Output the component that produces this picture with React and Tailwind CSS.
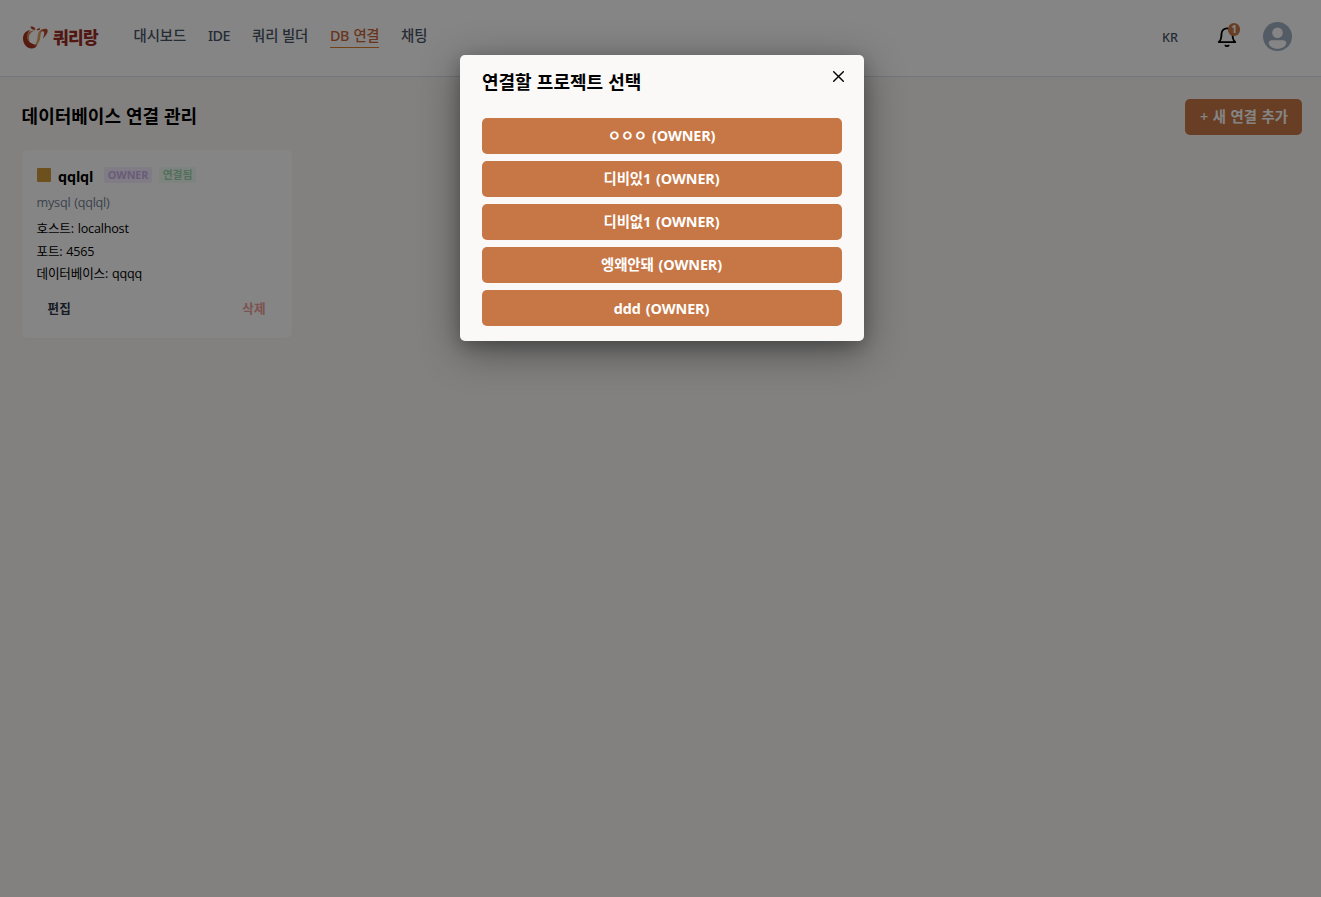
import React from "react";

const projects = ["ㅇㅇㅇ (OWNER)", "디비있1 (OWNER)", "디비없1 (OWNER)", "엥왜안돼 (OWNER)", "ddd (OWNER)"];

function Logo() {
  return (
    <div className="flex w-[111.500px] items-center pt-[3px]">
      <svg className="h-[26px] w-[27px] shrink-0" viewBox="0 0 27 26" fill="none">
        <path d="M8.500 5C4 5.500.8 9 1 14c.3 5.500 4.200 9.500 8.500 9.500 3 0 5-1.500 6-4.500-1.500.7-3.500.5-5.200-.2C6.500 17 4.500 13.500 5.500 9.500 6 7.500 7 6 8.500 5Z" fill="#a83222" />
        <path d="M5 9.500C6.500 6.500 9.500 5.200 13.500 5.500c-4 .8-6 3-6.500 6-.3 2 0 3.500.8 5C5.500 15 4.500 12.500 5 9.500Z" fill="#d4854b" />
        <path d="M12 21c2.800-2.500 3.300-6.500 3.800-10.500C16.300 6 19 4 22 4c-3 2-3.200 4.500-3.700 8-.6 4.800-2.300 7.800-6.300 9Z" fill="#dfa35d" />
        <path d="M18 7.500C19.500 4.300 22.500 3 24.800 4c2 1.300.8 5.500-4 9.500 1.500-3.500 2-6.200.7-7-.9-.5-2.300-.1-3.500 1Z" fill="#b94a30" />
        <path d="M8.300 1.800c2.500-.8 4.400.2 5.200 2.800-2.300.8-4.400-.2-5.200-2.800Z" fill="#b83c26" />
        <path d="M15.500 4.600 17.500 4" stroke="#b83c26" strokeWidth="1.400" strokeLinecap="round" />
      </svg>
      <span className="ml-[4px] text-[17px] leading-6 font-black tracking-[-0.7px] whitespace-nowrap text-[#9c2d26]">쿼리랑</span>
    </div>
  );
}

function Header() {
  return (
    <header className="flex h-[77px] items-center border-b border-[#d9dfe7] bg-white pr-[29px] pb-[3px] pl-[22px]">
      <Logo />
      <nav className="flex flex-1 gap-[22px] font-['Noto_Sans','Noto_Sans_CJK_KR',sans-serif] text-[14.4px] leading-[22px] font-medium whitespace-nowrap text-[#4a5568]">
        <span className="w-[52.5px] tracking-[-0.1px]">대시보드</span>
        <span className="w-[22px] tracking-[-0.6px]">IDE</span>
        <span className="w-[56px] tracking-[-0.1px]">쿼리 빌더</span>
        <span className="h-[23px] w-[49px] border-b border-[#dd7d2b] tracking-[-0.4px] [word-spacing:1px] text-[#c76739]">DB 연결</span>
        <span className="w-[26px]">채팅</span>
      </nav>
      <span className="mt-[4px] w-[54px] font-['Noto_Sans','Noto_Sans_CJK_KR',sans-serif] text-[12.6px] font-medium text-[#4a5568]">KR</span>
      <div className="relative mr-[25px] h-[22px] w-[22px]">
        <svg className="h-[22px] w-[22px]" viewBox="0 0 24 24" fill="none" stroke="black" strokeWidth="2" strokeLinejoin="round">
          <path d="M18 8.500A6 6 0 0 0 6 8.500c0 7-3 9-3 9h18s-3-2-3-9M14.200 20.800a2.600 2.600 0 0 1-4.400 0" />
        </svg>
        <span className="absolute -top-[3px] left-[12px] flex h-[13px] w-[12px] items-center justify-center rounded-full bg-[#c77748] text-[10px] leading-[13px] font-bold text-white">1</span>
      </div>
      <svg className="h-[29px] w-[29px]" viewBox="0 0 29 29">
        <circle cx="14.500" cy="14.500" r="14.500" fill="#a0aec0" />
        <circle cx="14.500" cy="10.700" r="5.300" fill="white" />
        <path d="M5.700 21c0-2 1.300-2.800 3.300-2.800h11c2 0 3.300.8 3.300 2.800 0 3.300-4.500 5.800-8.800 5.800S5.700 24.300 5.700 21Z" fill="white" />
      </svg>
    </header>
  );
}

function ConnectionCard() {
  return (
    <section className="mt-[15px] h-[188px] w-[270.400px] rounded-[5px] bg-white px-[15px] pt-[14px] shadow-[0_1px_2px_rgba(0,0,0,0.03)]">
      <div className="flex h-[22px] items-center whitespace-nowrap">
        <span className="h-[14px] w-[14px] rounded-[1px] bg-[#d09c3c]" />
        <span className="mt-[3px] ml-[7.500px] w-[36px] text-[14.4px] leading-[22px] font-bold tracking-[-0.2px]">qqlql</span>
        <span className="ml-[10px] flex h-[16px] w-[48px] items-center justify-center rounded-[2px] bg-[#f3edff] text-[10.8px] font-bold tracking-[-0.1px] text-[#cbb0e9]">OWNER</span>
        <span className="ml-[7px] flex h-[16px] w-[37px] items-center justify-center rounded-[2px] bg-[#effbf2] text-[10.8px] font-bold text-[#a0d5ae]">연결됨</span>
      </div>
      <p className="mt-[7px] text-[12.6px] leading-[19px] tracking-[-0.22px] [word-spacing:0.8px] text-[#718096]">mysql (qqlql)</p>
      <div className="mt-[6px] text-[12.6px] leading-[22.5px] tracking-[-0.2px] [word-spacing:0.8px]">
        <p>호스트: localhost</p>
        <p>포트: 4565</p>
        <p>데이터베이스: qqqq</p>
      </div>
      <div className="mt-[13.500px] flex justify-between pr-[11.500px] pl-[11px] text-[12.600px] leading-[20px] font-semibold">
        <button className="text-[#2d3748]">편집</button>
        <button className="text-[#ec9f98]">삭제</button>
      </div>
    </section>
  );
}

function ProjectDialog() {
  return (
    <div role="dialog" className="h-[286px] w-[404px] rounded-[5px] bg-[#faf9f7] px-[22px] pt-[14px] shadow-[0_10px_40px_rgba(0,0,0,0.4),0_5px_15px_rgba(0,0,0,0.2)]">
      <div className="flex h-[49px] items-start justify-between">
        <h2 className="text-[18px] leading-[26px] font-semibold whitespace-nowrap [word-spacing:0.5px]">연결할 프로젝트 선택</h2>
        <button aria-label="닫기" className="-mr-[2px] mt-[2px]">
          <svg className="h-[11px] w-[11px]" viewBox="0 0 11 11" fill="none" stroke="black" strokeWidth="1.400" strokeLinecap="round">
            <path d="m.7.7 9.600 9.600m0-9.600L.7 10.300" />
          </svg>
        </button>
      </div>
      <div className="flex flex-col gap-[7px]">
        {projects.map((name) => (
          <button key={name} className="h-[36px] rounded-[5px] bg-[#c77746] pr-[1px] text-[14.4px] leading-[20px] font-bold tracking-[-0.15px] [word-spacing:1.5px] text-white last:pt-[2px]">{name}</button>
        ))}
      </div>
    </div>
  );
}

export default function App() {
  return (
    <div className="relative h-[897px] w-full overflow-hidden bg-[#faf8f5] font-['Open_Sans','Noto_Sans_CJK_KR',sans-serif] text-black">
      <Header />
      <main className="pt-[22px] pr-[22px] pl-[21.600px]">
        <div className="-mr-[3px] flex h-[36px] items-center justify-between">
          <h1 className="-mt-[2px] text-[18px] leading-[26px] font-semibold whitespace-nowrap [word-spacing:0.3px]">데이터베이스 연결 관리</h1>
          <button className="h-[36px] w-[117px] rounded-[5px] bg-[#c77746] pl-[1px] text-[14.4px] font-semibold whitespace-nowrap text-white [word-spacing:0.8px]">+ 새 연결 추가</button>
        </div>
        <ConnectionCard />
      </main>
      <div className="absolute inset-0 flex items-start justify-center bg-black/48 pt-[55px] pl-[3px]">
        <ProjectDialog />
      </div>
    </div>
  );
}
